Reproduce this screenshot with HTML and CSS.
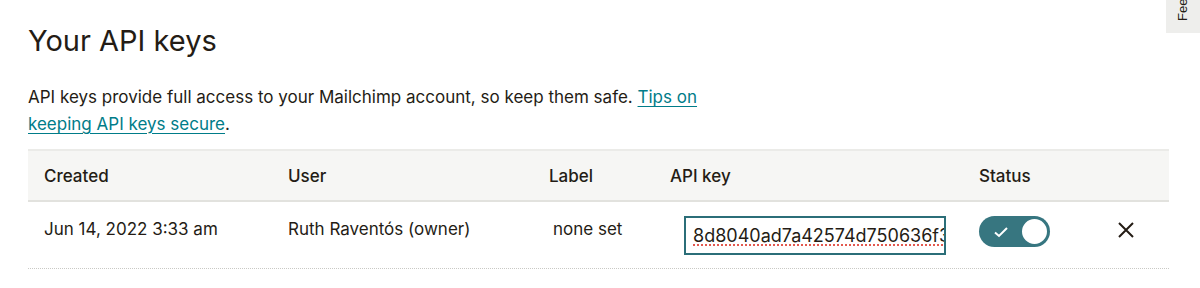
FILE: index.html
```html
<!DOCTYPE html>
<html lang="en">
<head>
    <meta charset="UTF-8">
    <title>API keys</title>
    <link rel="stylesheet" href="styles.css">
</head>
<body>
    <div class="feedback"><span>Feedback</span></div>

    <main class="page">
        <h1 class="title">Your API keys</h1>
        <p class="intro">
            API keys provide full access to your Mailchimp account, so keep them safe.
            <a href="#">Tips on keeping API keys secure</a>.
        </p>

        <div class="keys">
            <div class="keys-row keys-head">
                <div class="cell">Created</div>
                <div class="cell">User</div>
                <div class="cell">Label</div>
                <div class="cell">API key</div>
                <div class="cell">Status</div>
                <div class="cell"></div>
            </div>
            <div class="keys-row keys-body">
                <div class="cell">Jun 14, 2022 3:33 am</div>
                <div class="cell">Ruth Raventós (owner)</div>
                <div class="cell label-cell">none set</div>
                <div class="cell">
                    <div class="key-field"><span class="misspelled">8d8040ad7a42574d750636f3c1e9a2b4-us14</span></div>
                </div>
                <div class="cell">
                    <div class="toggle">
                        <svg class="check" width="16" height="12" viewBox="0 0 16 12">
                            <path d="M2 6.5 L6 10 L14 2" fill="none" stroke="#fff" stroke-width="2"/>
                        </svg>
                        <span class="knob"></span>
                    </div>
                </div>
                <div class="cell">
                    <svg class="remove" width="18" height="18" viewBox="0 0 18 18">
                        <path d="M2 2 L16 16 M16 2 L2 16" stroke="#241c15" stroke-width="2"/>
                    </svg>
                </div>
            </div>
        </div>
    </main>
</body>
</html>
```

FILE: styles.css
```css
body {
    margin: 0;
    font-family: Inter, "Noto Sans", sans-serif;
    color: #241c15;
    background-color: #fff;
}
.page {
    padding: 22px 31px 0 28px;
}
.title {
    margin: 0;
    font-size: 29px;
    font-weight: 400;
    line-height: 38px;
}
.intro {
    margin: 24px 0 11px 0;
    max-width: 690px;
    font-size: 17px;
    line-height: 27px;
}
.intro a {
    color: #007c89;
    text-decoration: underline;
    text-underline-offset: 3px;
}
.keys-row {
    display: grid;
    grid-template-columns: 244px 261px 121px 309px 138px 1fr;
}
.keys-head {
    background-color: #f6f6f4;
    border-top: 2px solid #ebebe8;
    border-bottom: 2px solid #e2e2de;
    height: 49px;
    align-items: center;
    font-size: 17px;
    font-weight: 500;
}
.keys-body {
    height: 66px;
    border-bottom: 1px dotted #c9c9c5;
    font-size: 17px;
}
.cell {
    padding-left: 16px;
}
.keys-body .cell {
    padding-top: 17px;
}
.keys-body .label-cell {
    padding-left: 20px;
}
.key-field {
    margin-left: 14px;
    margin-top: -3px;
    width: 251px;
    height: 35px;
    border: 2px solid #2b6e78;
    overflow: hidden;
    white-space: nowrap;
    font-size: 18px;
    line-height: 36px;
    padding-left: 7px;
    box-sizing: content-box;
}
.misspelled {
    text-decoration: underline dotted #e0473c;
    text-underline-offset: 3px;
}
.toggle {
    margin-top: -3px;
    width: 71px;
    height: 31px;
    border-radius: 16px;
    background-color: #377680;
    display: flex;
    align-items: center;
    justify-content: space-between;
    padding: 0 1px 0 14px;
    box-sizing: border-box;
}
.knob {
    width: 29px;
    height: 29px;
    border-radius: 50%;
    background-color: #fff;
    box-sizing: border-box;
    border: 2px solid #377680;
}
.remove {
    display: block;
    margin-top: 2px;
}
.feedback {
    position: fixed;
    top: 0;
    right: 0;
    width: 34px;
    height: 33px;
    background-color: #eeeeec;
    overflow: hidden;
}
.feedback span {
    position: absolute;
    left: 9px;
    top: 21px;
    font-family: "Liberation Sans", Arial, sans-serif;
    font-size: 13px;
    line-height: 16px;
    color: #241c15;
    transform-origin: left top;
    transform: rotate(-90deg);
    white-space: nowrap;
}
```
